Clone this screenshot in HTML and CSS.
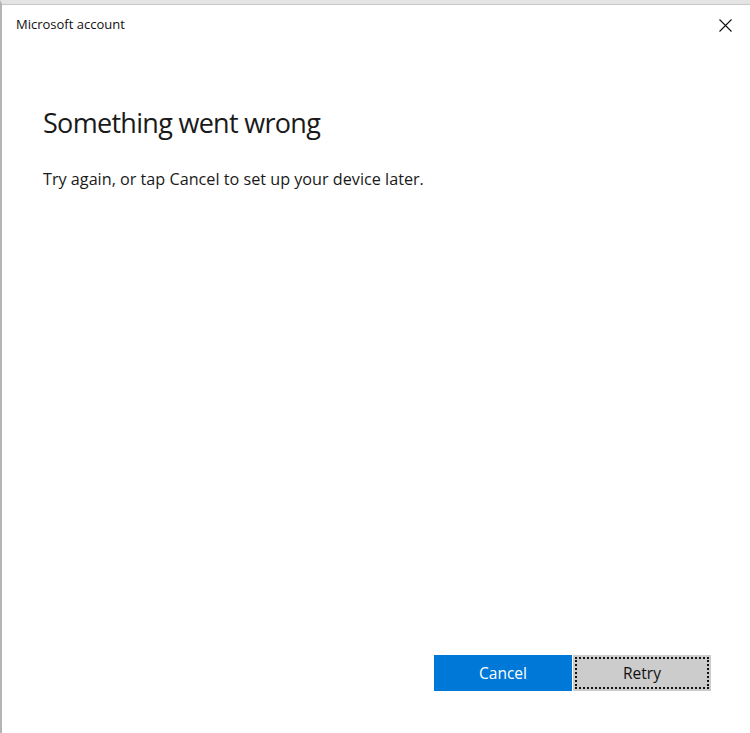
FILE: index.html
```html
<!DOCTYPE html>
<html>
<head>
<meta charset="utf-8">
<link rel="stylesheet" href="styles.css">
</head>
<body>
<div class="window">
  <div class="titlebar">
    <span class="title">Microsoft account</span>
    <span class="close"><svg width="13" height="13" viewBox="0 0 13 13"><path d="M0.5 0.5L12.5 12.5M12.5 0.5L0.5 12.5" stroke="#111" stroke-width="1.1" fill="none"/></svg></span>
  </div>
  <div class="content">
    <h1 class="heading">Something went wrong</h1>
    <p class="message">Try again, or tap Cancel to set up your device later.</p>
  </div>
  <div class="buttons">
    <button class="btn btn-primary">Cancel</button>
    <button class="btn btn-secondary"><span class="focus">Retry</span></button>
  </div>
</div>
</body>
</html>
```
FILE: styles.css
```css
html, body {
  margin: 0;
  padding: 0;
  background: #ffffff;
}
body {
  font-family: "Open Sans", "Noto Sans", "Liberation Sans", sans-serif;
  color: #1a1a1a;
}
.window {
  width: 750px;
  height: 733px;
  box-sizing: border-box;
  border-top: 4px solid #e4e4e4;
  border-left: 2px solid #b4b4b4;
  display: flex;
  flex-direction: column;
  position: relative;
}
.window::before {
  content: "";
  position: absolute;
  top: 0;
  left: 0;
  right: 0;
  height: 1px;
  background: #c6c6c6;
}
.titlebar {
  height: 38px;
  display: flex;
  align-items: center;
  justify-content: space-between;
  padding: 2px 18px 0 14px;
  box-sizing: border-box;
}
.title {
  font-size: 13px;
  color: #111;
}
.close {
  display: flex;
  margin-top: 2px;
}
.content {
  flex: 1;
  padding: 63px 0 0 41px;
}
.heading {
  margin: 0;
  font-weight: 400;
  font-size: 27px;
  letter-spacing: -0.7px;
  color: #1a1a1a;
  line-height: 36px;
}
.message {
  margin: 27px 0 0 0;
  font-size: 16.2px;
  color: #1a1a1a;
}
.buttons {
  display: flex;
  padding: 0 39px 42px 432px;
}
.btn {
  width: 138px;
  height: 36px;
  border: none;
  margin: 0;
  padding: 0;
  font-family: inherit;
  font-size: 15.5px;
  display: flex;
  align-items: center;
  justify-content: center;
}
.btn-primary {
  background: #0078d7;
  color: #ffffff;
  margin-right: 1px;
}
.btn-secondary {
  background: #cccccc;
  color: #111;
  padding: 2px;
}
.focus {
  flex: 1;
  align-self: stretch;
  display: flex;
  align-items: center;
  justify-content: center;
  border: 2px dotted #111;
}
```
